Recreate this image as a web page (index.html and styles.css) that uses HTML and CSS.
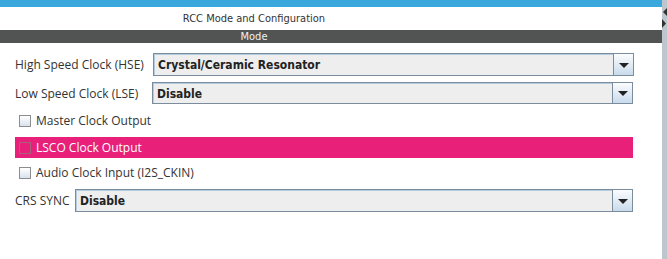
FILE: index.html
```html
<!DOCTYPE html>
<html>
<head>
<meta charset="utf-8">
<link rel="stylesheet" href="styles.css">
</head>
<body>
<div class="window">
  <div class="main">
    <div class="topbar"></div>
    <div class="title"><span class="title-text">RCC Mode and Configuration</span></div>
    <div class="modebar"><span class="title-text">Mode</span></div>
    <div class="content">
      <div class="row row-hse">
        <span class="label">High Speed Clock (HSE)</span>
        <div class="combo combo-hse">
          <div class="combo-field">Crystal/Ceramic Resonator</div>
          <div class="combo-btn"><span class="arrow"></span></div>
        </div>
      </div>
      <div class="row row-lse">
        <span class="label">Low Speed Clock (LSE)</span>
        <div class="combo combo-lse">
          <div class="combo-field">Disable</div>
          <div class="combo-btn"><span class="arrow"></span></div>
        </div>
      </div>
      <div class="check-row row-mco">
        <span class="checkbox"></span><span class="label">Master Clock Output</span>
      </div>
      <div class="check-row row-lsco selected">
        <span class="checkbox"></span><span class="label">LSCO Clock Output</span>
      </div>
      <div class="check-row row-audio">
        <span class="checkbox"></span><span class="label">Audio Clock Input (I2S_CKIN)</span>
      </div>
      <div class="row row-crs">
        <span class="label">CRS SYNC</span>
        <div class="combo combo-crs">
          <div class="combo-field">Disable</div>
          <div class="combo-btn"><span class="arrow"></span></div>
        </div>
      </div>
    </div>
  </div>
  <div class="side">
    <svg class="side-arrows" width="5" height="30" viewBox="0 0 5 30">
      <polygon points="5,8 1,12 5,16" fill="#333"/>
      <polygon points="0,19 4,23.5 0,28" fill="#333"/>
    </svg>
  </div>
</div>
</body>
</html>
```
FILE: styles.css
```css
* { box-sizing: border-box; }
html, body { margin: 0; padding: 0; background: #ffffff; }
body { width: 667px; height: 259px; overflow: hidden; }
.window { display: flex; width: 667px; height: 259px; }
.main { width: 662px; display: flex; flex-direction: column; }
.side { width: 5px; background: #bcc6cc; }
.side-arrows { display: block; }
.topbar { height: 7px; background: #3aa8dc; }
.title {
  height: 23px;
  font-family: "DejaVu Sans Condensed", "DejaVu Sans", sans-serif;
  font-size: 11px;
  color: #333;
  display: flex;
  align-items: center;
}
.title-text { width: 508px; text-align: center; display: block; }
.modebar {
  height: 13px;
  background: #525453;
  color: #f0f0f0;
  font-family: "DejaVu Sans Condensed", "DejaVu Sans", sans-serif;
  font-size: 11px;
  line-height: 13px;
  display: flex;
}
.content {
  padding: 10px 0 0 15px;
  display: flex;
  flex-direction: column;
  font-family: "Open Sans", "DejaVu Sans", sans-serif;
  font-size: 12px;
  color: #333;
}
.row { display: flex; align-items: center; }
.label { white-space: nowrap; }
.row-hse { height: 23px; }
.row-lse { height: 22px; margin-top: 6px; }
.row-hse .label { width: 138px; }
.row-lse .label { width: 137px; }
.row-crs .label { width: 60px; }
.combo {
  display: flex;
  height: 100%;
  width: 481px;
  border: 1px solid #7b8c9c;
  background: #eeeeee;
}
.combo-lse { width: 481px; }
.combo-crs { width: 558px; }
.row-crs { height: 23px; margin-top: 6px; }
.combo-field {
  flex: 1;
  border-top: 1px solid #b4cbe0;
  border-left: 1px solid #b4cbe0;
  padding-left: 3px;
  font-family: "DejaVu Sans Condensed", "DejaVu Sans", sans-serif;
  font-weight: bold;
  font-size: 12px;
  color: #222;
  display: flex;
  align-items: center;
}
.combo-btn {
  width: 20px;
  border-left: 1px solid #7b8c9c;
  background: linear-gradient(#fbfcfe, #c9dbec);
  display: flex;
  align-items: center;
  justify-content: center;
}
.arrow {
  width: 0; height: 0;
  border-left: 5px solid transparent;
  border-right: 5px solid transparent;
  border-top: 5px solid #222;
  margin-top: 1px;
}
.check-row {
  display: flex;
  align-items: center;
  height: 21px;
  width: 618px;
  padding-left: 4px;
}
.row-mco { margin-top: 6px; }
.row-lsco { margin-top: 6px; }
.row-audio { margin-top: 4px; }
.selected { background: #e8207a; color: #fff; }
.checkbox {
  width: 12px; height: 12px;
  border: 1px solid #8d8d8d;
  background: linear-gradient(#ffffff, #d8e2ec);
  margin-right: 5px;
  flex: none;
}
.selected .checkbox { background: transparent; border-color: #a8607f; }
```
